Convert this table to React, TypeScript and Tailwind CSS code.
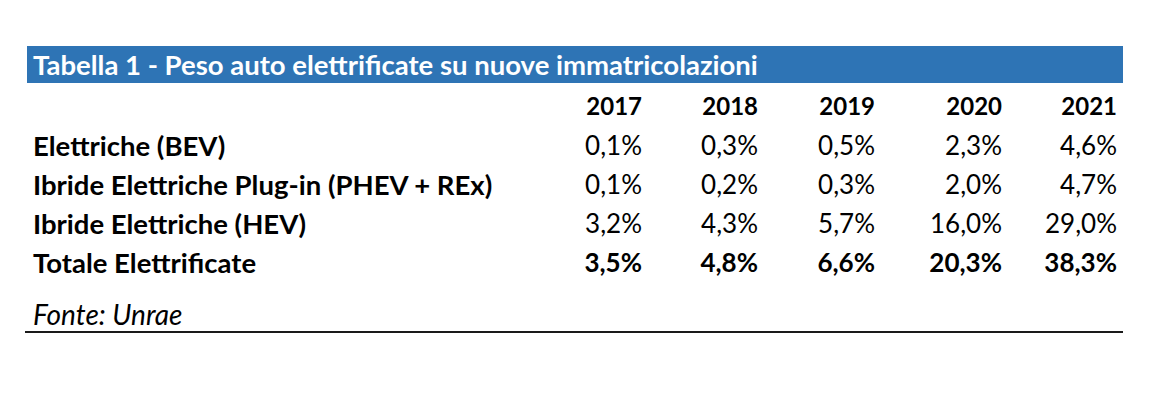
const years = ["2017", "2018", "2019", "2020", "2021"];

const rows = [
  { label: "Elettriche (BEV)", values: ["0,1%", "0,3%", "0,5%", "2,3%", "4,6%"] },
  { label: "Ibride Elettriche Plug-in (PHEV + REx)", values: ["0,1%", "0,2%", "0,3%", "2,0%", "4,7%"] },
  { label: "Ibride Elettriche (HEV)", values: ["3,2%", "4,3%", "5,7%", "16,0%", "29,0%"] },
  { label: "Totale Elettrificate", values: ["3,5%", "4,8%", "6,6%", "20,3%", "38,3%"], total: true },
];

const grid = "grid grid-cols-[500px_115px_116px_117px_127px_115px] items-center h-[39px]";

export default function App() {
  return (
    <div className="w-[1159px] h-[405px] bg-white text-black font-['Lato','Noto_Sans',sans-serif]">
      <div className="w-[1096px] ml-[27px] pt-[46px]">
        <div className="h-[37px] bg-[#2e74b5] px-[6px] flex items-center text-white font-bold text-[27.5px] leading-none">
          Tabella 1 - Peso auto elettrificate su nuove immatricolazioni
        </div>

        <div className="mt-[3px]">
          <div className={grid + " font-bold text-[24px]"}>
            <div />
            {years.map((y) => (
              <div key={y} className="text-right">{y}</div>
            ))}
          </div>

          {rows.map((r) => (
            <div key={r.label} className={grid}>
              <div className="pl-[6px] font-bold whitespace-nowrap text-[27.5px]">{r.label}</div>
              {r.values.map((v, i) => (
                <div key={i} className={"text-right text-[26px] " + (r.total ? "font-bold" : "")}>
                  {v}
                </div>
              ))}
            </div>
          ))}
        </div>

        <div className="mt-[15px] -ml-[2px] h-[37px] pl-[8px] flex items-center border-b-2 border-[#1a1a1a] italic text-[28px]">
          Fonte: Unrae
        </div>
      </div>
    </div>
  );
}
